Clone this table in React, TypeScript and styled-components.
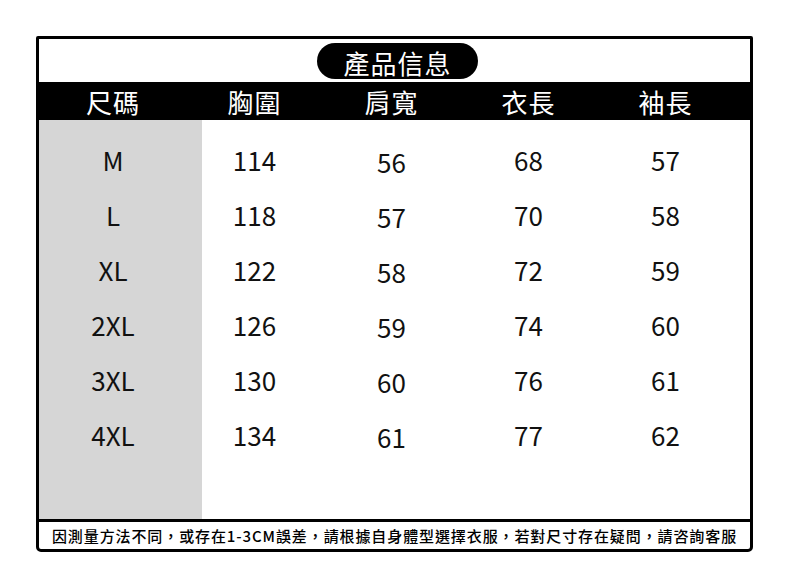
import styled, { createGlobalStyle } from 'styled-components';

const GlobalStyle = createGlobalStyle`
  html, body {
    margin: 0;
    padding: 0;
    background: #fff;
  }
  body {
    font-family: "Noto Sans CJK TC", "Noto Sans", sans-serif;
  }
`;

const Page = styled.div`
  width: 790px;
  height: 581px;
  padding: 36px 0 0 36px;
  box-sizing: border-box;
`;

const Frame = styled.div`
  width: 717px;
  height: 516px;
  box-sizing: border-box;
  border: 3px solid #000;
  border-radius: 2px 2px 5px 5px;
  display: flex;
  flex-direction: column;
  overflow: hidden;
`;

const TitleStrip = styled.div`
  height: 43px;
  display: flex;
  justify-content: center;
  align-items: flex-start;
  padding: 4px 0 0 6px;
  box-sizing: border-box;
`;

const Pill = styled.div`
  width: 161px;
  height: 36px;
  border-radius: 18px;
  background: #000;
  color: #fff;
  font-size: 26px;
  line-height: 40px;
  text-align: center;
  letter-spacing: 1px;
`;

const Grid = styled.div`
  display: grid;
  grid-template-columns: 163px repeat(4, 137px);
`;

const HeaderBar = styled(Grid)`
  height: 38px;
  background: #000;
  color: #fff;
`;

const HeadCell = styled.div<{ $first?: boolean }>`
  font-size: 26px;
  font-weight: 400;
  line-height: 40px;
  text-align: center;
  letter-spacing: 1px;
  padding-right: ${p => (p.$first ? 15 : 32)}px;
`;

const Body = styled(Grid)`
  flex: 1;
`;

const Column = styled.div<{ $shade?: boolean; $first?: boolean }>`
  background: ${p => (p.$shade ? '#d6d6d6' : '#fff')};
  padding-top: 12px;
  padding-right: ${p => (p.$first ? 15 : 32)}px;
  display: flex;
  flex-direction: column;
`;

const Value = styled.div<{ $drop?: number }>`
  height: 55px;
  line-height: 55px;
  font-size: 26px;
  color: #111;
  text-align: center;
  transform: translateY(${p => p.$drop ?? 0}px);
`;

const Footer = styled.div`
  height: 27px;
  border-top: 3px solid #000;
  font-size: 15px;
  font-weight: 500;
  letter-spacing: 0.9px;
  line-height: 27px;
  text-align: center;
  color: #000;
  white-space: nowrap;
`;

const headers = ['尺碼', '胸圍', '肩寬', '衣長', '袖長'];

const columns: string[][] = [
  ['M', 'L', 'XL', '2XL', '3XL', '4XL'],
  ['114', '118', '122', '126', '130', '134'],
  ['56', '57', '58', '59', '60', '61'],
  ['68', '70', '72', '74', '76', '77'],
  ['57', '58', '59', '60', '61', '62'],
];

export default function App() {
  return (
    <Page>
      <GlobalStyle />
      <Frame>
        <TitleStrip>
          <Pill>產品信息</Pill>
        </TitleStrip>
        <HeaderBar>
          {headers.map((h, i) => (
            <HeadCell key={h} $first={i === 0}>
              {h}
            </HeadCell>
          ))}
        </HeaderBar>
        <Body>
          {columns.map((col, i) => (
            <Column key={i} $shade={i === 0} $first={i === 0}>
              {col.map((v, j) => (
                <Value key={j} $drop={i === 2 ? 2 : 0}>
                  {v}
                </Value>
              ))}
            </Column>
          ))}
        </Body>
        <Footer>因測量方法不同，或存在1-3CM誤差，請根據自身體型選擇衣服，若對尺寸存在疑問，請咨詢客服</Footer>
      </Frame>
    </Page>
  );
}
